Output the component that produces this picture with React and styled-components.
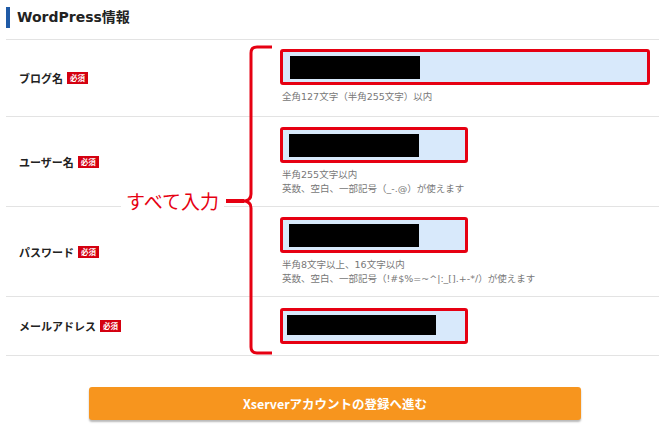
import React from "react";
import styled, { createGlobalStyle } from "styled-components";

const Global = createGlobalStyle`
  html, body { margin: 0; padding: 0; background: #fff; }
  body { font-family: "Noto Sans", "Noto Sans CJK JP", sans-serif; color: #222; }
`;

const Page = styled.div`
  position: relative;
  width: 659px;
  height: 429px;
  overflow: hidden;
`;

const Section = styled.section`
  margin-left: 6px;
`;

const Heading = styled.div`
  height: 40px;
  box-sizing: border-box;
  padding-top: 7px;
  border-bottom: 1px solid #e3e3e3;
`;

const Title = styled.h2`
  margin: 0;
  border-left: 4px solid #1f5aa6;
  padding-left: 7px;
  height: 21px;
  line-height: 21px;
  font-size: 14px;
  font-weight: 700;
  color: #222;
  font-family: "DejaVu Sans", "Noto Sans CJK JP", sans-serif;
`;

const Row = styled.div`
  display: grid;
  grid-template-columns: 274px 1fr;
  height: ${(p) => p.h}px;
  border-bottom: 1px solid #e3e3e3;
`;

const Label = styled.div`
  display: flex;
  align-items: center;
  gap: 4px;
  padding-left: 13px;
  font-size: 11px;
  font-weight: 700;
  color: #222;
  font-family: "Noto Sans CJK JP", sans-serif;
`;

const Badge = styled.span`
  display: inline-block;
  background: #d40010;
  color: #fff;
  font-size: 7.5px;
  font-weight: 700;
  line-height: 12px;
  padding: 0 3px;
`;

const Field = styled.div`
  align-self: ${(p) => (p.center ? "center" : "start")};
  padding-top: ${(p) => (p.center ? 0 : p.pt)}px;
`;

const Input = styled.div`
  box-sizing: border-box;
  width: ${(p) => p.w}px;
  height: 36px;
  border: 3px solid #e60012;
  border-radius: 3px;
  background: #d8e9fb;
  padding: 4px 0 0 ${(p) => p.pl}px;
`;

const Redaction = styled.div`
  width: ${(p) => p.w}px;
  height: ${(p) => p.hh}px;
  background: #000;
`;

const Hint = styled.div`
  margin-top: 5px;
  padding-left: 2px;
  font-size: 9.5px;
  line-height: 14px;
  color: #777;
  font-family: "DejaVu Sans", "Noto Sans CJK JP", sans-serif;
`;

const ButtonWrap = styled.div`
  padding: 31px 0 0 83px;
`;

const Button = styled.button`
  display: block;
  width: 492px;
  height: 33px;
  border: none;
  border-radius: 3px;
  background: #f7951e;
  color: #fff;
  font-family: "Noto Sans CJK JP", sans-serif;
  font-size: 12.5px;
  font-weight: 700;
  box-shadow: 0 2px 2px rgba(0, 0, 0, 0.28);
  cursor: pointer;
`;

const Bracket = styled.svg`
  position: absolute;
  left: 0;
  top: 0;
  pointer-events: none;
`;

const Note = styled.div`
  position: absolute;
  left: 121px;
  top: 189px;
  padding: 0 5px;
  background: #fff;
  color: #e60012;
  font-size: 19px;
  line-height: 24px;
  font-family: "Noto Sans CJK JP", sans-serif;
`;

export default function App() {
  return (
    <>
      <Global />
      <Page>
        <Section>
          <Heading>
            <Title>WordPress情報</Title>
          </Heading>
          <Row h={76}>
            <Label>
              ブログ名<Badge>必須</Badge>
            </Label>
            <Field pt={9}>
              <Input w={370} pl={7}>
                <Redaction w={130} hh={23} />
              </Input>
              <Hint>全角127文字（半角255文字）以内</Hint>
            </Field>
          </Row>
          <Row h={89}>
            <Label>
              ユーザー名<Badge>必須</Badge>
            </Label>
            <Field pt={10}>
              <Input w={188} pl={6}>
                <Redaction w={130} hh={23} />
              </Input>
              <Hint>
                半角255文字以内
                <br />
                英数、空白、一部記号（_-.@）が使えます
              </Hint>
            </Field>
          </Row>
          <Row h={89}>
            <Label>
              パスワード<Badge>必須</Badge>
            </Label>
            <Field pt={10}>
              <Input w={188} pl={6}>
                <Redaction w={130} hh={23} />
              </Input>
              <Hint>
                半角8文字以上、16文字以内
                <br />
                英数、空白、一部記号（!#$%=~^|:_[].+-*/）が使えます
              </Hint>
            </Field>
          </Row>
          <Row h={58}>
            <Label>
              メールアドレス<Badge>必須</Badge>
            </Label>
            <Field center>
              <Input w={188} pl={4}>
                <Redaction w={149} hh={20} />
              </Input>
            </Field>
          </Row>
          <ButtonWrap>
            <Button>Xserverアカウントの登録へ進む</Button>
          </ButtonWrap>
        </Section>
        <Bracket width="659" height="429" viewBox="0 0 659 429">
          <path
            d="M272 47 H257 Q251 47 251 53 V194 Q251 201 243 201 Q251 201 251 208 V347 Q251 353 257 353 H272"
            fill="none"
            stroke="#e60012"
            strokeWidth="3"
          />
          <path d="M226 201 H244" stroke="#e60012" strokeWidth="4" />
        </Bracket>
        <Note>すべて入力</Note>
      </Page>
    </>
  );
}
